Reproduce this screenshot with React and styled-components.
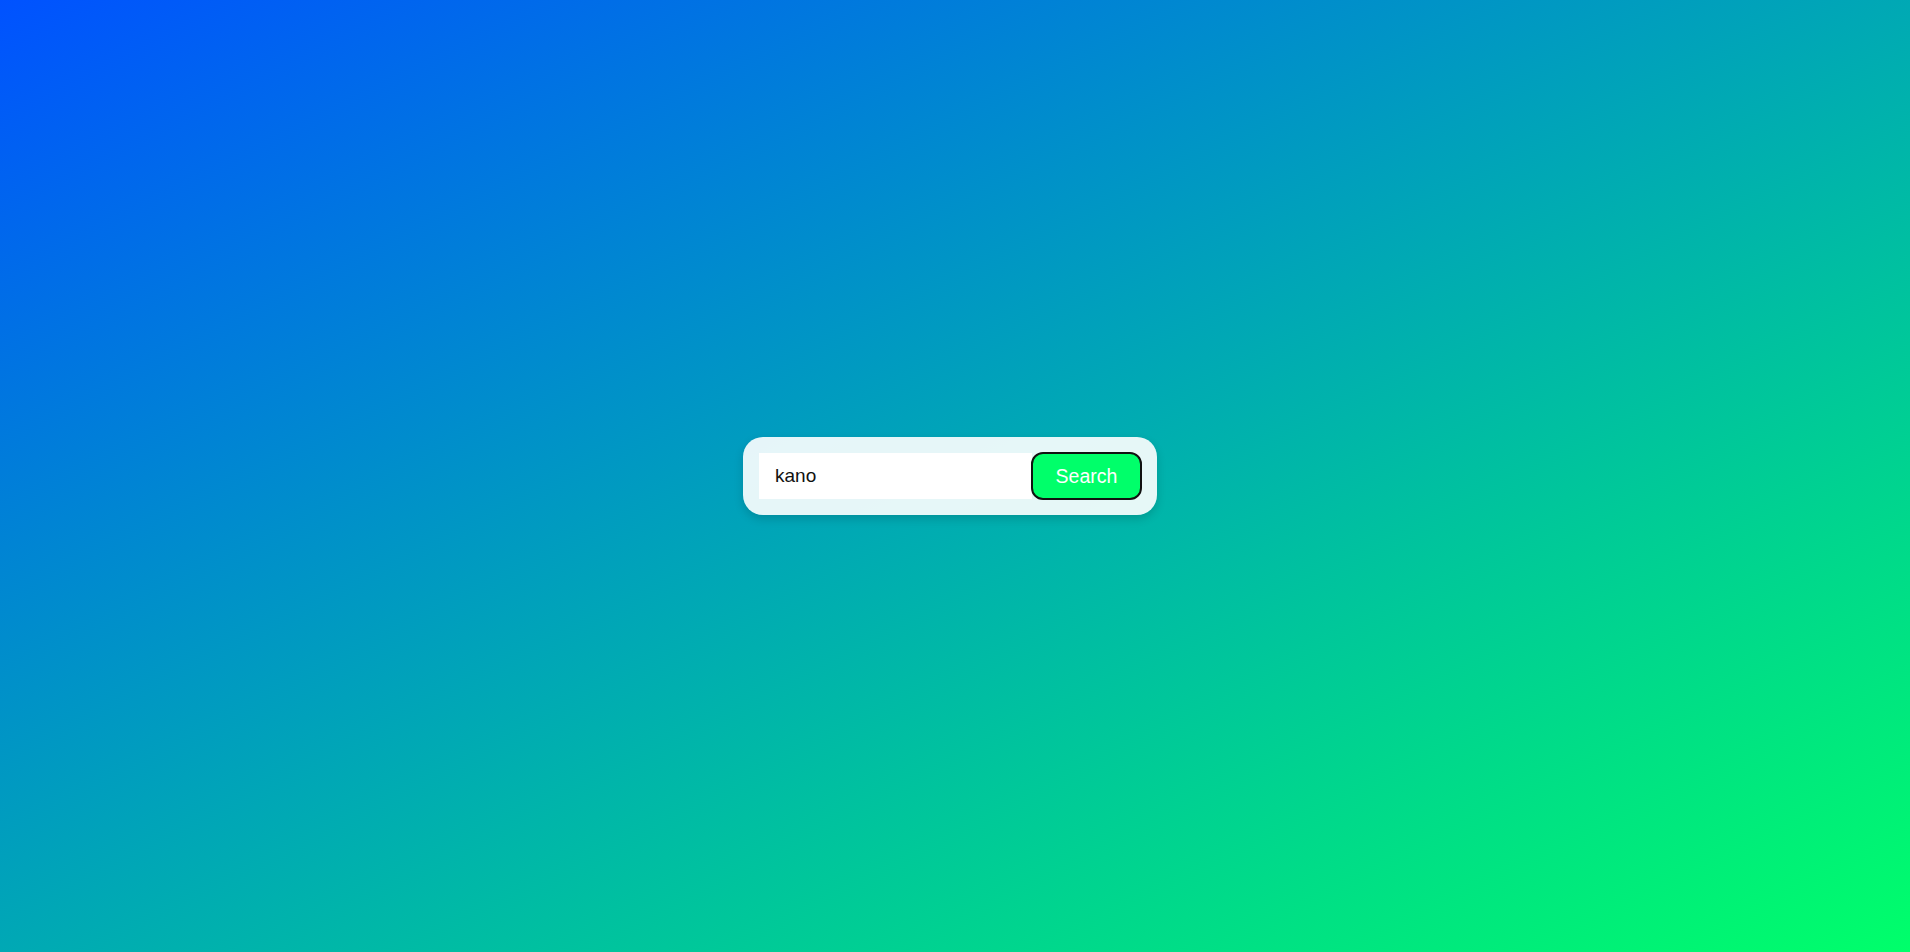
import React, { useState } from 'react';
import styled, { createGlobalStyle } from 'styled-components';

const GlobalStyle = createGlobalStyle`
  html, body {
    margin: 0;
    padding: 0;
    height: 100%;
  }
  body {
    font-family: 'Liberation Sans', Arial, sans-serif;
  }
  #root {
    height: 100%;
  }
`;

const App = () => {
  const [query, setQuery] = useState('kano');

  return (
    <Page>
      <GlobalStyle />
      <SearchBar onSubmit={(e) => e.preventDefault()}>
        <SearchInput
          type="text"
          value={query}
          onChange={(e) => setQuery(e.target.value)}
        />
        <SearchButton type="submit">Search</SearchButton>
      </SearchBar>
    </Page>
  );
};

const Page = styled.div`
  width: 100vw;
  height: 100vh;
  display: flex;
  align-items: center;
  justify-content: center;
  padding-right: 10px;
  box-sizing: border-box;
  background: linear-gradient(to bottom right, #0052ff, #00ff6a);
`;

const SearchBar = styled.form`
  display: flex;
  align-items: center;
  padding: 15px 15px 15px 16px;
  background-color: rgba(255, 255, 255, 0.9);
  border-radius: 20px;
  box-shadow: 0 4px 10px rgba(0, 0, 0, 0.15);
`;

const SearchInput = styled.input`
  width: 273px;
  height: 46px;
  box-sizing: border-box;
  padding: 0 16px;
  border: none;
  outline: none;
  background: #fff;
  font-family: 'Liberation Sans', Arial, sans-serif;
  font-size: 19px;
  color: #111;
`;

const SearchButton = styled.button`
  width: 111px;
  height: 48px;
  margin-left: -1px;
  box-sizing: border-box;
  border: 2px solid #111;
  border-radius: 12px;
  background-color: #00ff6a;
  color: #fff;
  font-family: 'Liberation Sans', Arial, sans-serif;
  font-size: 19.5px;
  cursor: pointer;
`;

export default App;
